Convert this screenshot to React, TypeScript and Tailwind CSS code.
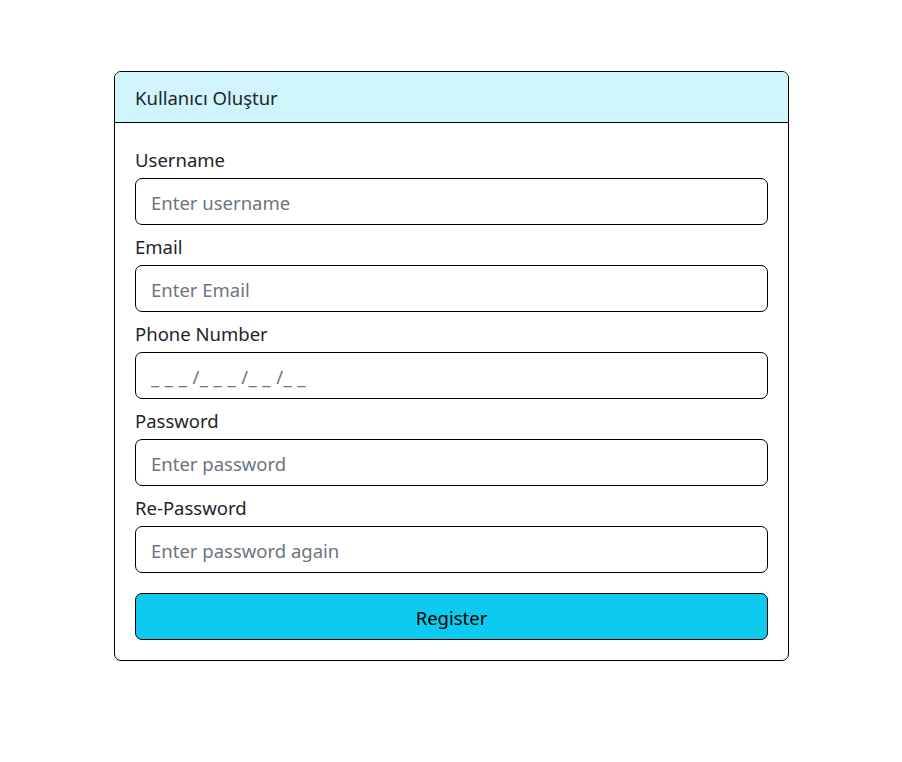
import React from "react"

const FIELDS = [
  { label: "Username", placeholder: "Enter username", type: "text", extra: "" },
  { label: "Email", placeholder: "Enter Email", type: "email", extra: "" },
  { label: "Phone Number", placeholder: "_ _ _ /_ _ _ /_ _ /_ _", type: "tel", extra: "placeholder:tracking-[0.4px]" },
  { label: "Password", placeholder: "Enter password", type: "password", extra: "" },
  { label: "Re-Password", placeholder: "Enter password again", type: "password", extra: "" },
]

export default function App() {
  return (
    <div
      className="min-h-screen w-full bg-white text-[#212529]"
      style={{ fontFamily: '"Noto Sans", "Open Sans", sans-serif' }}
    >
      <div className="flex justify-center pt-[71px] pl-px">
        <div className="w-[675px] rounded-[7px] border border-black overflow-hidden">
          {/* Header */}
          <div className="h-[51px] px-5 pt-[2px] flex items-center bg-[#cff4fc] border-b border-black text-[18.5px]">
            Kullanıcı Oluştur
          </div>

          {/* Body */}
          <form className="p-5 flex flex-col" onSubmit={(e) => e.preventDefault()}>
            {FIELDS.map((f, i) => (
              <div key={f.label} className={i > 0 ? "mt-[5px]" : ""}>
                <label className="block h-[32px] mb-[3px] text-[18.5px] leading-[33px]">{f.label}</label>
                <input
                  type={f.type}
                  placeholder={f.placeholder}
                  className={"block w-full h-[47px] pl-[15px] pr-4 pt-[2px] rounded-[7px] border border-black text-[18.5px] placeholder:text-[#6c757d] outline-none " + f.extra}
                />
              </div>
            ))}
            <button
              type="submit"
              className="mt-5 h-[47px] w-full pt-[3px] rounded-[7px] border border-black bg-[#0dcaf0] text-[18.5px] text-black"
            >
              Register
            </button>
          </form>
        </div>
      </div>
    </div>
  )
}
